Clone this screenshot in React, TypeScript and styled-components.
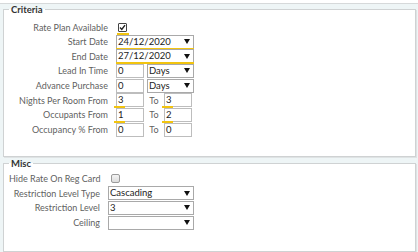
import React from 'react';
import styled, { createGlobalStyle } from 'styled-components';

const GlobalStyle = createGlobalStyle`
    html, body {
        margin: 0;
        padding: 0;
        background: #ffffff;
    }
    body {
        font-family: Lato, 'Open Sans', sans-serif;
        font-size: 9px;
        color: #5f5f5f;
    }
`;

const Page = styled.div`
    width: 418px;
    height: 252px;
    overflow: hidden;
    padding-top: 3px;
    box-sizing: border-box;
`;

const Body = styled.div`
    border-top: 1px solid #d6d9da;
    background: #eef5f6;
    padding: 0 2px 0 3px;
    height: 100%;
    box-sizing: border-box;
    display: flex;
    flex-direction: column;
    gap: 1px;
`;

const Section = styled.fieldset<{ $grow?: boolean; $top: number; $bottom: number }>`
    margin: 0;
    padding: ${(p) => p.$top}px 5px ${(p) => p.$bottom}px 5px;
    border: 1px solid #cfd2d3;
    box-shadow: 1px 1px 0 #dfe3e4;
    background: #fff;
    min-width: 0;
    flex: ${(p) => (p.$grow ? '1' : 'none')};
    display: flex;
    flex-direction: column;
    gap: 0.67px;
`;

const Legend = styled.legend`
    padding: 0 2px;
    margin-left: 0;
    font-weight: bold;
    color: #333;
    font-size: 9.5px;
    line-height: 11px;
`;

const Row = styled.div`
    display: flex;
    align-items: center;
    height: 14px;
`;

const Label = styled.div<{ $width: number }>`
    width: ${(p) => p.$width}px;
    margin-right: 8px;
    text-align: right;
    white-space: nowrap;
    color: #5f5f5f;
`;

const Box = styled.div<{ $width: number; $mark?: 'full' | 'short' }>`
    position: relative;
    width: ${(p) => p.$width}px;
    height: 14px;
    box-sizing: border-box;
    border: 1px solid #bdbdbd;
    background: #fff;
    color: #222;
    font-size: 9.5px;
    line-height: 12px;
    padding-left: 1px;
    display: flex;
    align-items: center;
    justify-content: space-between;
    &::after {
        content: '';
        display: ${(p) => (p.$mark ? 'block' : 'none')};
        position: absolute;
        left: ${(p) => (p.$mark === 'short' ? '-3px' : '-1px')};
        bottom: -2px;
        height: 2px;
        width: ${(p) => (p.$mark === 'short' ? '11px' : 'calc(100% + 2px)')};
        background: #f2c40f;
    }
`;

const Select = styled(Box)`
    border-color: #a9a9a9;
    padding-right: 3px;
`;

const Arrow = styled.span`
    width: 0;
    height: 0;
    border-left: 3px solid transparent;
    border-right: 3px solid transparent;
    border-top: 5px solid #111;
`;

const To = styled.span`
    width: 20px;
    text-align: center;
    color: #5f5f5f;
`;

const Gap = styled.span`
    width: 3px;
`;

const Check = styled.span<{ $checked?: boolean; $mark?: boolean }>`
    position: relative;
    width: 9px;
    height: 9px;
    box-sizing: border-box;
    margin-left: ${(p) => (p.$checked ? '2px' : '3px')};
    border: 1px solid ${(p) => (p.$checked ? '#444' : '#9a9a9a')};
    border-radius: ${(p) => (p.$checked ? '1px' : '2px')};
    background: ${(p) => (p.$checked ? '#fff' : 'linear-gradient(#f4f4f4, #dcdcdc)')};
    display: flex;
    align-items: center;
    justify-content: center;
    &::after {
        content: '';
        display: ${(p) => (p.$mark ? 'block' : 'none')};
        position: absolute;
        left: -2px;
        bottom: -4px;
        width: 12px;
        height: 2px;
        background: #f2c40f;
    }
`;

function Tick() {
    return (
        <svg width='7' height='7' viewBox='0 0 7 7'>
            <path d='M1 3.6 L2.8 5.4 L6 1.2' fill='none' stroke='#222' strokeWidth='1.4' />
        </svg>
    );
}

function Dropdown(props: { width: number; value: string; mark?: boolean }) {
    return (
        <Select $width={props.width} $mark={props.mark ? 'full' : undefined}>
            <span>{props.value}</span>
            <Arrow />
        </Select>
    );
}

function RangeRow(props: { label: string; from: string; to: string; marks?: boolean }) {
    return (
        <Row>
            <Label $width={99}>{props.label}</Label>
            <Box $width={28} $mark={props.marks ? 'short' : undefined}>
                {props.from}
            </Box>
            <To>To</To>
            <Box $width={28} $mark={props.marks ? 'short' : undefined}>
                {props.to}
            </Box>
        </Row>
    );
}

function PeriodRow(props: { label: string; value: string }) {
    return (
        <Row>
            <Label $width={99}>{props.label}</Label>
            <Box $width={28}>{props.value}</Box>
            <Gap />
            <Dropdown width={47} value='Days' />
        </Row>
    );
}

export default function App() {
    return (
        <Page>
            <GlobalStyle />
            <Body>
                <Section $top={5} $bottom={19}>
                    <Legend>Criteria</Legend>
                    <Row>
                        <Label $width={99}>Rate Plan Available</Label>
                        <Check $checked $mark>
                            <Tick />
                        </Check>
                    </Row>
                    <Row>
                        <Label $width={99}>Start Date</Label>
                        <Dropdown width={78} value='24/12/2020' mark />
                    </Row>
                    <Row>
                        <Label $width={99}>End Date</Label>
                        <Dropdown width={78} value='27/12/2020' mark />
                    </Row>
                    <PeriodRow label='Lead In Time' value='0' />
                    <PeriodRow label='Advance Purchase' value='0' />
                    <RangeRow label='Nights Per Room From' from='3' to='3' marks />
                    <RangeRow label='Occupants From' from='1' to='2' marks />
                    <RangeRow label='Occupancy % From' from='0' to='0' />
                </Section>
                <Section $grow $top={3} $bottom={0}>
                    <Legend>Misc</Legend>
                    <Row>
                        <Label $width={91}>Hide Rate On Reg Card</Label>
                        <Check />
                    </Row>
                    <Row>
                        <Label $width={91}>Restriction Level Type</Label>
                        <Dropdown width={86} value='Cascading' />
                    </Row>
                    <Row>
                        <Label $width={91}>Restriction Level</Label>
                        <Dropdown width={86} value='3' />
                    </Row>
                    <Row>
                        <Label $width={91}>Ceiling</Label>
                        <Dropdown width={86} value='' />
                    </Row>
                </Section>
            </Body>
        </Page>
    );
}
